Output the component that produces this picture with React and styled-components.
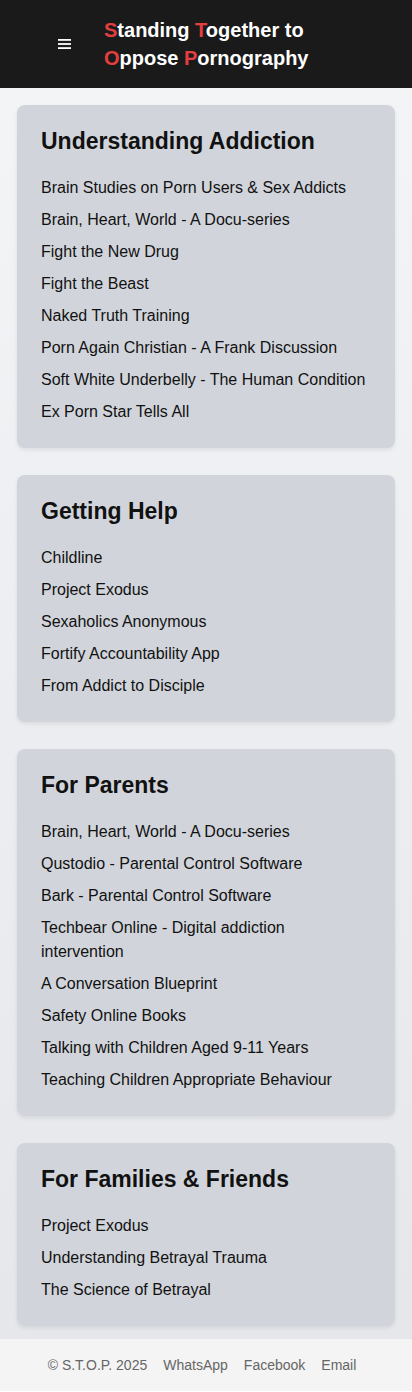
import styled, { createGlobalStyle } from "styled-components";

const GlobalStyle = createGlobalStyle`
  body {
    margin: 0;
    font-family: "Liberation Sans", Arial, sans-serif;
    color: #111;
  }
`;

const Header = styled.header`
  display: flex;
  align-items: center;
  gap: 33px;
  height: 88px;
  padding-left: 58px;
  box-sizing: border-box;
  background: #1a1a1a;
`;

const Burger = styled.svg`
  display: block;
  flex: none;
`;

const Title = styled.h1`
  margin: 0;
  font-size: 20px;
  font-weight: 700;
  line-height: 28px;
  color: #fff;
`;

const Red = styled.span`
  color: #e53e3e;
`;

const Main = styled.main`
  display: flex;
  flex-direction: column;
  gap: 27px;
  padding: 17px 17px 13px;
  background: linear-gradient(#f3f4f6, #e5e7eb);
`;

const Card = styled.section`
  background: #d1d5db;
  border-radius: 8px;
  padding: 24px;
  box-shadow: 0 2px 4px rgba(0, 0, 0, 0.08);
`;

const Heading = styled.h2`
  margin: 0 0 23px;
  font-size: 23px;
  line-height: 24px;
  font-weight: 700;
  color: #111;
`;

const List = styled.ul`
  list-style: none;
  margin: 0;
  padding: 0;
  display: flex;
  flex-direction: column;
  gap: 8px;
`;

const Item = styled.li`
  font-size: 16px;
  line-height: 24px;
  color: #111;
`;

const Footer = styled.footer`
  display: flex;
  justify-content: center;
  align-items: center;
  gap: 16px;
  height: 52px;
  padding-right: 8px;
  background: #f4f4f4;
  font-size: 14px;
  color: #666;
`;

const sections = [
  {
    title: "Understanding Addiction",
    items: [
      "Brain Studies on Porn Users & Sex Addicts",
      "Brain, Heart, World - A Docu-series",
      "Fight the New Drug",
      "Fight the Beast",
      "Naked Truth Training",
      "Porn Again Christian - A Frank Discussion",
      "Soft White Underbelly - The Human Condition",
      "Ex Porn Star Tells All",
    ],
  },
  {
    title: "Getting Help",
    items: [
      "Childline",
      "Project Exodus",
      "Sexaholics Anonymous",
      "Fortify Accountability App",
      "From Addict to Disciple",
    ],
  },
  {
    title: "For Parents",
    items: [
      "Brain, Heart, World - A Docu-series",
      "Qustodio - Parental Control Software",
      "Bark - Parental Control Software",
      "Techbear Online - Digital addiction intervention",
      "A Conversation Blueprint",
      "Safety Online Books",
      "Talking with Children Aged 9-11 Years",
      "Teaching Children Appropriate Behaviour",
    ],
  },
  {
    title: "For Families & Friends",
    items: [
      "Project Exodus",
      "Understanding Betrayal Trauma",
      "The Science of Betrayal",
    ],
  },
];

const App = () => (
  <>
    <GlobalStyle />
    <Header>
      <Burger width="13" height="10" viewBox="0 0 13 10">
        <rect x="0" y="0" width="13" height="1.8" fill="#fff" />
        <rect x="0" y="4.1" width="13" height="1.8" fill="#fff" />
        <rect x="0" y="8.2" width="13" height="1.8" fill="#fff" />
      </Burger>
      <Title>
        <Red>S</Red>tanding <Red>T</Red>ogether to
        <br />
        <Red>O</Red>ppose <Red>P</Red>ornography
      </Title>
    </Header>
    <Main>
      {sections.map((s) => (
        <Card key={s.title}>
          <Heading>{s.title}</Heading>
          <List>
            {s.items.map((it) => (
              <Item key={it}>{it}</Item>
            ))}
          </List>
        </Card>
      ))}
    </Main>
    <Footer>
      <span>© S.T.O.P. 2025</span>
      <span>WhatsApp</span>
      <span>Facebook</span>
      <span>Email</span>
    </Footer>
  </>
);

export default App;
